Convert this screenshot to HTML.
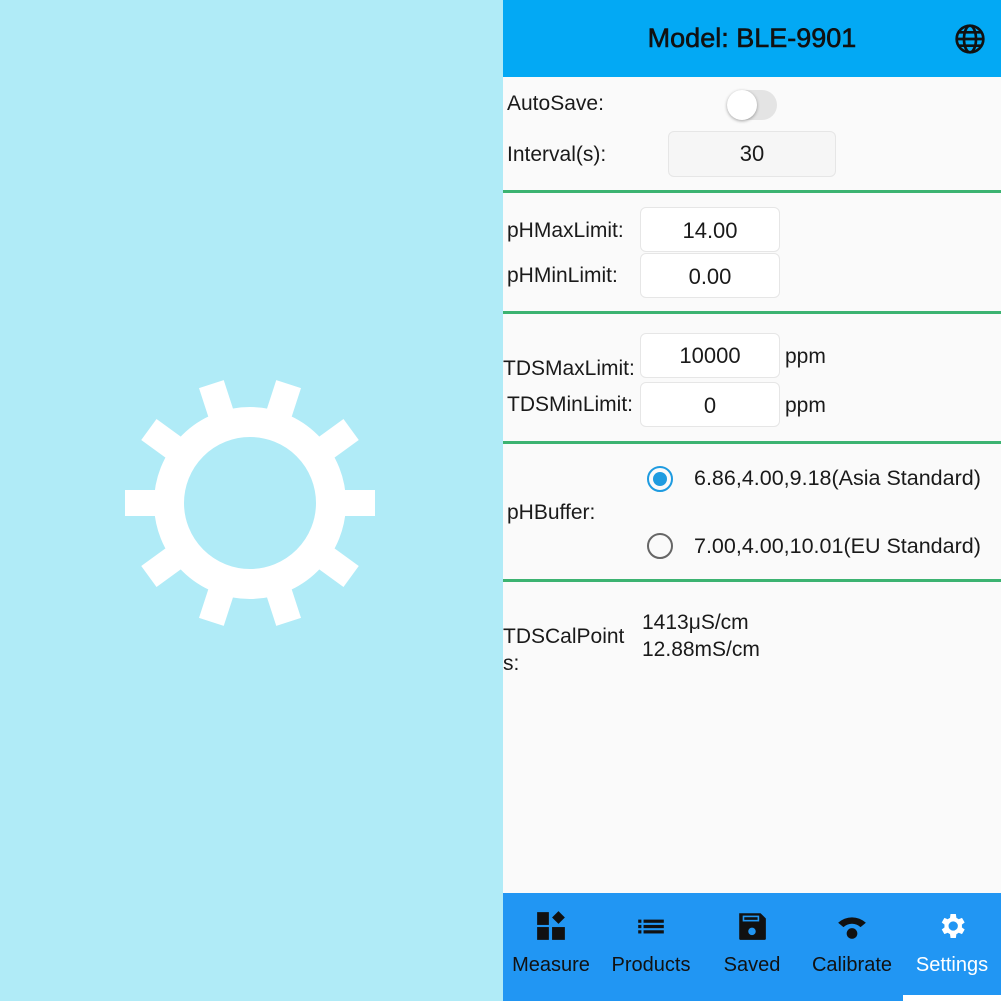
<!DOCTYPE html>
<html><head><meta charset="utf-8"><style>
*{margin:0;padding:0;box-sizing:border-box}
body{width:1001px;height:1001px;overflow:hidden;position:relative;font-family:"Liberation Sans",sans-serif;color:#1a1a1a;background:#fafafa}
.a{position:absolute;white-space:nowrap}
.l{font-size:21px}
.box{position:absolute;background:#fff;border:1px solid #e6e6e6;border-radius:6px;font-size:22px;text-align:center}
.hr{position:absolute;left:503px;width:498px;height:3px;background:#3cb371}
.nav{position:absolute;top:893px;left:503px;width:498px;height:108px;background:#2196f3}
.ni{position:absolute;top:0;width:100px;text-align:center;font-size:20px;color:#111}
.ni svg{display:block;margin:17px auto 0}
.ni span{display:block;margin-top:12px}
</style></head><body>
<div class="a" style="left:0;top:0;width:503px;height:1001px;background:#b0ebf7"></div>
<svg class="a" style="left:0;top:0" width="503" height="1001">
<g transform="translate(250,503)" fill="#fff">
<circle r="81" fill="none" stroke="#fff" stroke-width="30"/>
<g id="t"><rect x="85" y="-13" width="40" height="26"/></g>
<use href="#t" transform="rotate(36)"/><use href="#t" transform="rotate(72)"/><use href="#t" transform="rotate(108)"/><use href="#t" transform="rotate(144)"/><use href="#t" transform="rotate(180)"/><use href="#t" transform="rotate(216)"/><use href="#t" transform="rotate(252)"/><use href="#t" transform="rotate(288)"/><use href="#t" transform="rotate(324)"/>
</g></svg>
<div class="a" style="left:0;top:0;left:503px;width:498px;height:77px;background:#03a9f4"></div>
<div class="a" style="left:503px;top:23px;width:498px;text-align:center;font-size:27px;color:#111;-webkit-text-stroke:0.6px #111">Model: BLE-9901</div>
<svg class="a" style="left:954px;top:23px" width="32" height="32" viewBox="0 0 24 24" fill="none" stroke="#111" stroke-width="2"><circle cx="12" cy="12" r="10"/><ellipse cx="12" cy="12" rx="4.5" ry="10"/><path d="M2 12h20M3.5 7h17M3.5 17h17"/></svg>

<div class="a l" style="left:507px;top:92px">AutoSave:</div>
<div class="a" style="left:727px;top:90px;width:50px;height:30px;border-radius:15px;background:#e4e4e4"></div>
<div class="a" style="left:727px;top:90px;width:30px;height:30px;border-radius:15px;background:#fff;box-shadow:0 1px 3px rgba(0,0,0,.35)"></div>
<div class="a l" style="left:507px;top:143px">Interval(s):</div>
<div class="box" style="left:668px;top:131px;width:168px;height:46px;line-height:44px;background:#f6f6f6">30</div>
<div class="hr" style="top:190px"></div>

<div class="a l" style="left:507px;top:219px">pHMaxLimit:</div>
<div class="box" style="left:640px;top:207px;width:140px;height:45px;line-height:45px">14.00</div>
<div class="a l" style="left:507px;top:264px">pHMinLimit:</div>
<div class="box" style="left:640px;top:253px;width:140px;height:45px;line-height:45px">0.00</div>
<div class="hr" style="top:311px"></div>

<div class="a l" style="left:503px;top:357px">TDSMaxLimit:</div>
<div class="box" style="left:640px;top:333px;width:140px;height:45px;line-height:43px">10000</div>
<div class="a l" style="left:785px;top:345px">ppm</div>
<div class="a l" style="left:507px;top:393px">TDSMinLimit:</div>
<div class="box" style="left:640px;top:382px;width:140px;height:45px;line-height:45px">0</div>
<div class="a l" style="left:785px;top:394px">ppm</div>
<div class="hr" style="top:441px"></div>

<div class="a l" style="left:507px;top:501px">pHBuffer:</div>
<div class="a" style="left:647px;top:466px;width:26px;height:26px;border-radius:50%;border:2.5px solid #1e9be0"></div>
<div class="a" style="left:653px;top:472px;width:14px;height:14px;border-radius:50%;background:#1e9be0"></div>
<div class="a" style="left:694px;top:466px;font-size:21.5px">6.86,4.00,9.18(Asia Standard)</div>
<div class="a" style="left:647px;top:533px;width:26px;height:26px;border-radius:50%;border:2.5px solid #666"></div>
<div class="a" style="left:694px;top:534px;font-size:21.5px">7.00,4.00,10.01(EU Standard)</div>
<div class="hr" style="top:579px"></div>

<div class="a l" style="left:503px;top:625px">TDSCalPoint</div>
<div class="a l" style="left:503px;top:652px">s:</div>
<div class="a l" style="left:642px;top:611px">1413μS/cm</div>
<div class="a l" style="left:642px;top:638px">12.88mS/cm</div>

<div class="nav">
<div class="ni" style="left:-2px"><svg width="32" height="32" viewBox="0 0 30 30" fill="#111"><rect x="2" y="2" width="11" height="12"/><rect x="2" y="16" width="11" height="12"/><rect x="16" y="16" width="12" height="12"/><path d="M22 1l6 6-6 6-6-6z"/></svg><span>Measure</span></div>
<div class="ni" style="left:98px"><svg width="32" height="32" viewBox="0 0 30 30" fill="#111"><rect x="3" y="9" width="3" height="3"/><rect x="8" y="9" width="19" height="3"/><rect x="3" y="14" width="3" height="3"/><rect x="8" y="14" width="19" height="3"/><rect x="3" y="19" width="3" height="3"/><rect x="8" y="19" width="19" height="3"/></svg><span>Products</span></div>
<div class="ni" style="left:199px"><svg width="32" height="32" viewBox="0 0 30 30"><path d="M3 3h20l5 5v19a1 1 0 0 1-1 1H4a1 1 0 0 1-1-1z" fill="#111"/><rect x="7" y="6" width="14" height="4" fill="none" stroke="#2196f3" stroke-width="1.5"/><circle cx="15" cy="20" r="3.5" fill="#2196f3"/></svg><span>Saved</span></div>
<div class="ni" style="left:299px"><svg width="32" height="32" viewBox="0 0 30 30" fill="#111"><path d="M2 12a19 19 0 0 1 26 0l-5 4a12 12 0 0 0-16 0z"/><circle cx="15" cy="22" r="5"/></svg><span>Calibrate</span></div>
<div class="ni" style="left:399px;color:#fff"><svg width="32" height="32" viewBox="0 0 24 24" fill="#fff"><path d="M19.4 13a7.5 7.5 0 0 0 0-2l2.1-1.6-2-3.5-2.5 1a7.3 7.3 0 0 0-1.7-1L14.9 3h-4l-.4 2.9a7.3 7.3 0 0 0-1.7 1l-2.5-1-2 3.5L6.4 11a7.5 7.5 0 0 0 0 2l-2.1 1.6 2 3.5 2.5-1a7.3 7.3 0 0 0 1.7 1l.4 2.9h4l.4-2.9a7.3 7.3 0 0 0 1.7-1l2.5 1 2-3.5zM12.9 15.5a3.5 3.5 0 1 1 0-7 3.5 3.5 0 0 1 0 7z"/></svg><span>Settings</span></div>
</div>
<div class="a" style="left:903px;top:995px;width:98px;height:6px;background:#fff"></div>
</body></html>
